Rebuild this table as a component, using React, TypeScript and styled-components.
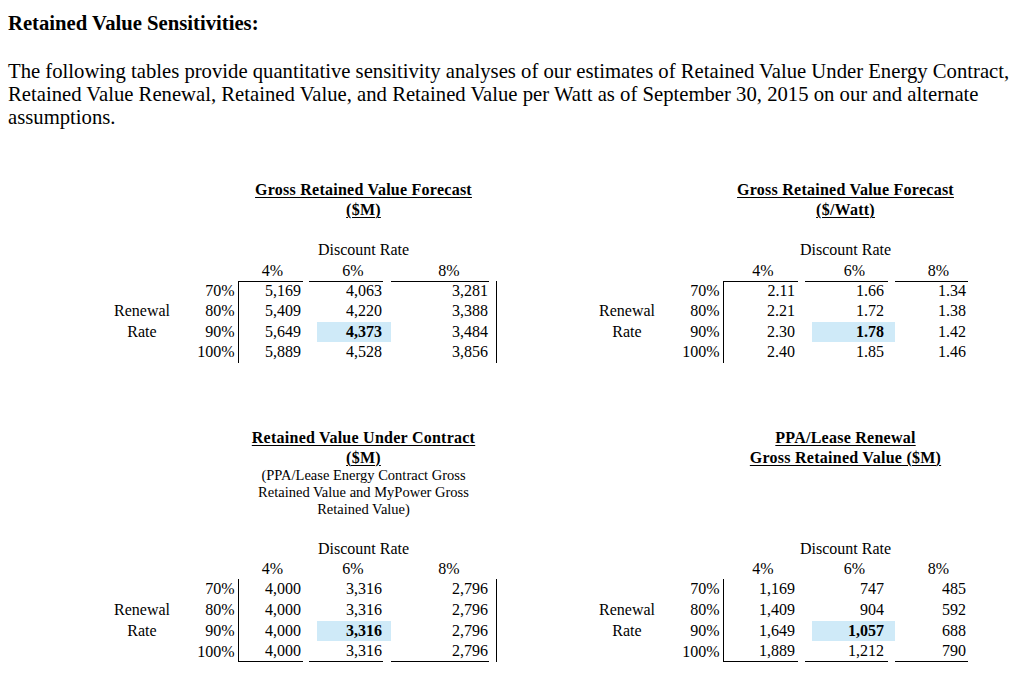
import React from "react";
import styled, { createGlobalStyle } from "styled-components";

const GlobalStyle = createGlobalStyle`
  html, body { margin: 0; padding: 0; background: #fff; }
  body {
    font-family: "Liberation Serif", "Times New Roman", serif;
    color: #000;
  }
`;

type Row = { pct: string; label?: string; values: string[] };
type Spec = {
  cols: number[]; // c4, g1, c6, g2, c8, g3
  pads: number[]; // right paddings of the value columns
  headOffsets: number[];
  rule: "top" | "bottom";
  rightRule: boolean;
  hlInset: number;
  hlPad: number;
  rowH: number;
  title: string[];
  subtitle?: string[];
  rows: Row[];
};

const LABEL_W = 84;
const PCT_W = 54;

const Page = styled.div`
  width: 1018px;
  min-height: 699px;
  box-sizing: border-box;
  padding: 12px 0 0 8px;
`;

const Heading = styled.h1`
  margin: 0;
  font-size: 20.7px;
  line-height: 23px;
  font-weight: bold;
  white-space: nowrap;
`;

const Intro = styled.p`
  margin: 25px 0 0;
  font-size: 20.7px;
  line-height: 23px;
  white-space: nowrap;
`;

const Band = styled.div<{ $top: number }>`
  display: grid;
  grid-template-columns: 485px 425px;
  align-items: start;
  margin: ${(p) => p.$top}px 0 0 92px;
`;

const TableTitle = styled.div<{ $w: number }>`
  margin-left: ${LABEL_W + PCT_W}px;
  width: ${(p) => p.$w}px;
  text-align: center;
  padding-bottom: 20px;
`;

const TitleLine = styled.div`
  font-size: 16px;
  line-height: 20px;
  font-weight: bold;
  letter-spacing: 0.25px;
  white-space: nowrap;
  & > span {
    text-decoration: underline;
    text-decoration-thickness: 1px;
    text-underline-offset: 2px;
  }
`;

const SubTitle = styled.div`
  font-size: 14.5px;
  line-height: 17px;
  margin: -0.5px 0 0.5px;
  white-space: nowrap;
`;

const DataGrid = styled.div<{ $cols: string; $rowH: number }>`
  display: grid;
  grid-template-columns: ${(p) => p.$cols};
  grid-template-rows: 20.5px 20px;
  grid-auto-rows: ${(p) => p.$rowH}px;
  font-size: 16px;
  line-height: 20px;
  align-self: start;
`;

const Empty = styled.div<{ $rightRule?: boolean }>`
  box-sizing: border-box;
  border-right: ${(p) => (p.$rightRule ? "1px solid #000" : "none")};
`;

const Discount = styled.div`
  grid-column: span 5;
  display: flex;
  align-items: center;
  justify-content: center;
  white-space: nowrap;
`;

const Head = styled.div<{ $shift: number }>`
  padding-left: ${(p) => p.$shift * 2}px;
  white-space: nowrap;
  display: flex;
  align-items: center;
  justify-content: center;
`;

const Label = styled.div`
  display: flex;
  align-items: center;
  justify-content: center;
`;

const Pct = styled.div`
  padding-right: 3.5px;
  display: flex;
  align-items: center;
  justify-content: flex-end;
`;

const Value = styled.div<{
  $pad: number;
  $leftRule?: boolean;
  $top?: boolean;
  $bottom?: boolean;
}>`
  box-sizing: border-box;
  display: flex;
  align-items: center;
  justify-content: flex-end;
  padding-right: ${(p) => p.$pad}px;
  border-left: ${(p) => (p.$leftRule ? "1px solid #000" : "none")};
  border-top: ${(p) => (p.$top ? "1px solid #000" : "none")};
  border-bottom: ${(p) => (p.$bottom ? "1px solid #000" : "none")};
`;

const Highlight = styled.div<{ $inset: number; $pad: number }>`
  grid-column: span 2;
  margin-left: ${(p) => p.$inset}px;
  background: #cfeaf8;
  font-weight: bold;
  display: flex;
  align-items: center;
  justify-content: flex-end;
  padding-right: ${(p) => p.$pad}px;
`;

function SensitivityTable({ spec, part }: { spec: Spec; part: "title" | "data" }) {
  const [c4, g1, c6, g2, c8, g3] = spec.cols;
  const spanW = c4 + g1 + c6 + g2 + c8;
  if (part === "title") {
    return (
      <TableTitle $w={spanW}>
        {spec.title.map((t) => (
          <TitleLine key={t}>
            <span>{t}</span>
          </TitleLine>
        ))}
        {spec.subtitle && (
          <SubTitle>
            {spec.subtitle.map((s) => (
              <div key={s}>{s}</div>
            ))}
          </SubTitle>
        )}
      </TableTitle>
    );
  }
  const cols = [LABEL_W, PCT_W, c4, g1, c6, g2, c8, g3].map((c) => `${c}px`).join(" ");
  const last = spec.rows.length - 1;
  return (
    <DataGrid $cols={cols} $rowH={spec.rowH}>
      <Empty />
      <Empty />
      <Discount>Discount Rate</Discount>
      <Empty />

      <Empty />
      <Empty />
      <Head $shift={spec.headOffsets[0]}>4%</Head>
      <Empty />
      <Head $shift={spec.headOffsets[1]}>6%</Head>
      <Empty />
      <Head $shift={spec.headOffsets[2]}>8%</Head>
      <Empty />

      {spec.rows.map((r, i) => {
        const top = spec.rule === "top" && i === 0;
        const bottom = spec.rule === "bottom" && i === last;
        const hl = i === 2;
        return (
          <React.Fragment key={r.pct}>
            <Label>{r.label ?? ""}</Label>
            <Pct>{r.pct}</Pct>
            <Value $pad={spec.pads[0]} $leftRule $top={top} $bottom={bottom}>
              {r.values[0]}
            </Value>
            <Empty />
            {hl ? (
              <Highlight $inset={spec.hlInset} $pad={spec.hlPad}>
                {r.values[1]}
              </Highlight>
            ) : (
              <>
                <Value $pad={spec.pads[1]} $top={top} $bottom={bottom}>
                  {r.values[1]}
                </Value>
                <Empty />
              </>
            )}
            <Value $pad={spec.pads[2]} $top={top} $bottom={bottom}>
              {r.values[2]}
            </Value>
            <Empty $rightRule={spec.rightRule} />
          </React.Fragment>
        );
      })}
    </DataGrid>
  );
}

const LEFT = {
  cols: [65, 6, 74, 8, 98, 8],
  pads: [2, 1, 1],
  headOffsets: [2, 7, 9],
  rightRule: true,
  hlInset: 8,
  hlPad: 9,
};
const RIGHT = {
  cols: [75, 7, 83, 7, 73, 0],
  pads: [3, 4, 2],
  headOffsets: [2.5, 8, 7],
  rightRule: false,
  hlInset: 7,
  hlPad: 11,
};

const rowLabels = ["", "Renewal", "Rate", ""];
const pcts = ["70%", "80%", "90%", "100%"];
const mkRows = (vals: string[][]): Row[] =>
  vals.map((v, i) => ({ pct: pcts[i], label: rowLabels[i], values: v }));

const topLeft: Spec = {
  ...LEFT,
  rule: "top",
  rowH: 20.5,
  title: ["Gross Retained Value Forecast", "($M)"],
  rows: mkRows([
    ["5,169", "4,063", "3,281"],
    ["5,409", "4,220", "3,388"],
    ["5,649", "4,373", "3,484"],
    ["5,889", "4,528", "3,856"],
  ]),
};

const topRight: Spec = {
  ...RIGHT,
  rule: "top",
  rowH: 20.5,
  title: ["Gross Retained Value Forecast", "($/Watt)"],
  rows: mkRows([
    ["2.11", "1.66", "1.34"],
    ["2.21", "1.72", "1.38"],
    ["2.30", "1.78", "1.42"],
    ["2.40", "1.85", "1.46"],
  ]),
};

const bottomLeft: Spec = {
  ...LEFT,
  rule: "bottom",
  rowH: 20.8,
  title: ["Retained Value Under Contract", "($M)"],
  subtitle: [
    "(PPA/Lease Energy Contract Gross",
    "Retained Value and MyPower Gross",
    "Retained Value)",
  ],
  rows: mkRows([
    ["4,000", "3,316", "2,796"],
    ["4,000", "3,316", "2,796"],
    ["4,000", "3,316", "2,796"],
    ["4,000", "3,316", "2,796"],
  ]),
};

const bottomRight: Spec = {
  ...RIGHT,
  rule: "bottom",
  rowH: 20.8,
  title: ["PPA/Lease Renewal", "Gross Retained Value ($M)"],
  rows: mkRows([
    ["1,169", "747", "485"],
    ["1,409", "904", "592"],
    ["1,649", "1,057", "688"],
    ["1,889", "1,212", "790"],
  ]),
};

function Pair({ left, right, top }: { left: Spec; right: Spec; top: number }) {
  return (
    <Band $top={top}>
      <SensitivityTable spec={left} part="title" />
      <SensitivityTable spec={right} part="title" />
      <SensitivityTable spec={left} part="data" />
      <SensitivityTable spec={right} part="data" />
    </Band>
  );
}

export default function App() {
  return (
    <>
      <GlobalStyle />
      <Page>
        <Heading>Retained Value Sensitivities:</Heading>
        <Intro>
          The following tables provide quantitative sensitivity analyses of our estimates of Retained Value Under Energy Contract,
          <br />
          Retained Value Renewal, Retained Value, and Retained Value per Watt as of September 30, 2015 on our and alternate
          <br />
          assumptions.
        </Intro>
        <Pair left={topLeft} right={topRight} top={51} />
        <Pair left={bottomLeft} right={bottomRight} top={65} />
      </Page>
    </>
  );
}
